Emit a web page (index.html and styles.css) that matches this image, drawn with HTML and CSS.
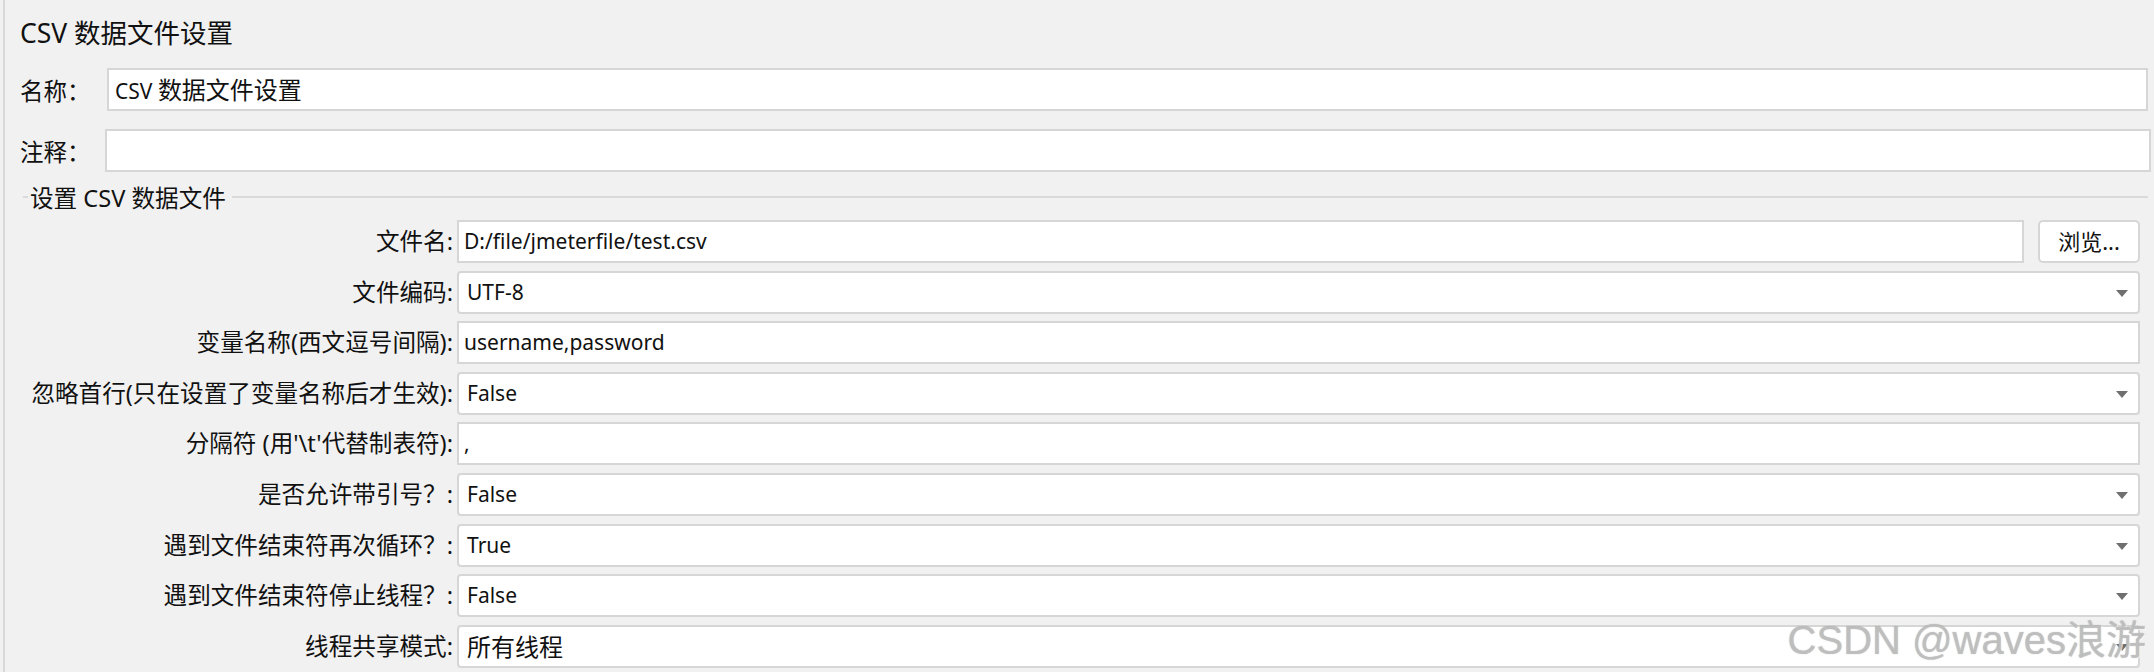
FILE: index.html
```html
<!DOCTYPE html>
<html lang="zh-CN">
<head>
<meta charset="utf-8">
<title>CSV 数据文件设置</title>
<link rel="stylesheet" href="styles.css">
</head>
<body>
<div class="page">
  <div class="panel">
    <h1 class="title">CSV 数据文件设置</h1>
    <div class="top-row name-row">
      <span class="top-label">名称：</span>
      <div class="box sq">CSV <span class="zh">数据文件设置</span></div>
    </div>
    <div class="top-row note-row">
      <span class="top-label">注释：</span>
      <div class="box sq"></div>
    </div>
    <div class="legend"><span class="legend-text">设置 CSV 数据文件</span></div>
    <div class="form">
      <span class="label">文件名:</span>
      <div class="with-btn">
        <div class="box text">D:/file/jmeterfile/test.csv</div>
        <div class="btn">浏览...</div>
      </div>

      <span class="label">文件编码:</span>
      <div class="box combo">UTF-8</div>

      <span class="label">变量名称(西文逗号间隔):</span>
      <div class="box text">username,password</div>

      <span class="label">忽略首行(只在设置了变量名称后才生效):</span>
      <div class="box combo">False</div>

      <span class="label">分隔符 (用'\t'代替制表符):</span>
      <div class="box text">,</div>

      <span class="label">是否允许带引号？:</span>
      <div class="box combo">False</div>

      <span class="label">遇到文件结束符再次循环？:</span>
      <div class="box combo">True</div>

      <span class="label">遇到文件结束符停止线程？:</span>
      <div class="box combo">False</div>

      <span class="label">线程共享模式:</span>
      <div class="box combo"><span class="zh">所有线程</span></div>
    </div>
  </div>
  <div class="watermark">CSDN @waves浪游</div>
</div>
</body>
</html>
```

FILE: styles.css
```css
* { box-sizing: border-box; }

html, body {
  margin: 0;
  padding: 0;
  background: #f1f1f1;
}

body {
  font-family: "Noto Sans", "Noto Sans CJK SC", sans-serif;
  color: #111;
}

.page {
  position: relative;
  width: 2154px;
  height: 672px;
  padding-left: 3px;
  overflow: hidden;
}

.panel {
  height: 100%;
  border-left: 2px solid #d9d9d9;
}

.title {
  margin: 0;
  height: 62px;
  padding-left: 15px;
  display: flex;
  align-items: center;
  font-size: 26.5px;
  font-weight: normal;
  color: #111;
}

.top-row {
  display: flex;
  align-items: center;
  height: 43px;
}

.name-row { margin-top: 6px; margin-right: 6px; }
.note-row { margin-top: 18px; margin-right: 3px; }

.top-label {
  font-size: 23.5px;
  padding-left: 15px;
}

.name-row .top-label { width: 102px; }
.note-row .top-label { width: 100px; }

.box {
  height: 43px;
  background: #fff;
  border: 2px solid #d6d6d6;
  font-size: 21px;
  line-height: 39px;
  white-space: nowrap;
  overflow: hidden;
  color: #111;
}

.zh { font-size: 24px; }

.top-row .box {
  flex: 1;
  padding-left: 6px;
}

.legend {
  margin-top: 10px;
  height: 30px;
  display: flex;
  align-items: center;
  padding-left: 18px;
  margin-right: 6px;
  font-size: 23.6px;
}

.legend::before {
  content: "";
  width: 5px;
  height: 2px;
  background: #dadada;
}

.legend::after {
  content: "";
  flex: 1;
  height: 2px;
  background: #dadada;
  margin-left: 6px;
}

.legend-text { padding-left: 2px; }

.form {
  margin-top: 8px;
  margin-right: 14px;
  display: grid;
  grid-template-columns: 452px 1fr;
  grid-auto-rows: 43px;
  row-gap: 7.6px;
}

.label {
  text-align: right;
  padding-right: 4px;
  font-size: 23.6px;
  line-height: 43px;
  white-space: nowrap;
}

.with-btn {
  display: flex;
  gap: 14px;
}

.with-btn .box { flex: 1; }

.text { padding-left: 5px; }

.combo {
  position: relative;
  border-radius: 4px;
  padding-left: 8px;
}

.combo::after {
  content: "";
  position: absolute;
  right: 10px;
  top: 17px;
  border-left: 6px solid transparent;
  border-right: 6px solid transparent;
  border-top: 7px solid #6f6f6f;
}

.btn {
  width: 102px;
  height: 43px;
  background: #fff;
  border: 2px solid #d6d6d6;
  border-radius: 5px;
  font-size: 22px;
  line-height: 39px;
  text-align: center;
}

.watermark {
  position: absolute;
  right: 8px;
  bottom: 12px;
  font-family: "Liberation Sans", "Noto Sans CJK SC", sans-serif;
  font-size: 40px;
  line-height: 1;
  color: rgba(195, 195, 195, 0.75);
  text-shadow: 0 0 1px rgba(120, 120, 120, 0.6), 1px 1px 0 rgba(255, 255, 255, 0.8);
  white-space: nowrap;
}
```
